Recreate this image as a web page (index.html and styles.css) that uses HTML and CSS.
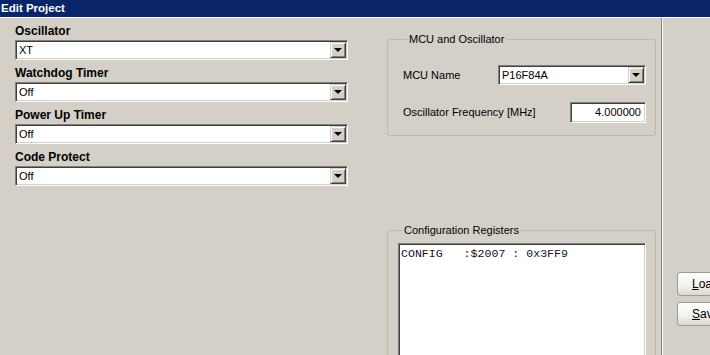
FILE: index.html
```html
<!DOCTYPE html>
<html lang="en">
<head>
    <meta charset="UTF-8">
    <title>Edit Project</title>
    <link rel="stylesheet" href="styles.css">
</head>
<body>
    <div class="titlebar">Edit Project</div>

    <div class="main">
        <!-- Fuse options -->
        <div class="options">
            <div class="field">
                <label>Oscillator</label>
                <div class="combo"><span class="value">XT</span><span class="drop"></span></div>
            </div>
            <div class="field">
                <label>Watchdog Timer</label>
                <div class="combo"><span class="value">Off</span><span class="drop"></span></div>
            </div>
            <div class="field">
                <label>Power Up Timer</label>
                <div class="combo"><span class="value">Off</span><span class="drop"></span></div>
            </div>
            <div class="field">
                <label>Code Protect</label>
                <div class="combo"><span class="value">Off</span><span class="drop"></span></div>
            </div>
        </div>

        <!-- MCU settings -->
        <div class="mcu">
            <fieldset class="group">
                <legend>MCU and Oscillator</legend>
                <div class="row">
                    <span>MCU Name</span>
                    <div class="combo mcu-combo"><span class="value">P16F84A</span><span class="drop"></span></div>
                </div>
                <div class="row">
                    <span>Oscillator Frequency [MHz]</span>
                    <div class="textbox">4.000000</div>
                </div>
            </fieldset>

            <fieldset class="group registers">
                <legend>Configuration Registers</legend>
                <div class="memo">CONFIG   :$2007 : 0x3FF9</div>
            </fieldset>
        </div>

        <div class="separator"></div>

        <div class="actions">
            <button><u>L</u>oad</button>
            <button><u>S</u>ave</button>
        </div>
    </div>
</body>
</html>
```

FILE: styles.css
```css
html, body {
    margin: 0;
    padding: 0;
}
body {
    width: 710px;
    height: 355px;
    overflow: hidden;
    background: #d4d0c8;
    font-family: "Liberation Sans", Arial, sans-serif;
    font-size: 11px;
    color: #000;
}
.titlebar {
    height: 17px;
    line-height: 16px;
    padding-left: 1px;
    background: #0a246a;
    color: #fff;
    font-weight: bold;
    font-size: 11.5px;
    border-bottom: 1px solid #fff;
}
.main {
    display: flex;
    height: 337px;
    overflow: hidden;
}
.main > * {
    flex: none;
}

/* left column */
.options {
    width: 333px;
    margin-left: 15px;
}
.field {
    margin-top: 5px;
}
.field label {
    display: block;
    font-weight: bold;
    font-size: 12px;
    line-height: 16px;
    margin-bottom: 1px;
}
.combo {
    display: flex;
    align-items: center;
    height: 20px;
    box-sizing: border-box;
    background: #fff;
    border: 1px solid;
    border-color: #808080 #fff #fff #808080;
    box-shadow: inset 1px 1px #404040, inset -1px -1px #d4d0c8;
    padding: 1px;
}
.combo .value {
    flex: 1;
    padding-left: 2px;
    line-height: 16px;
}
.drop {
    position: relative;
    width: 16px;
    height: 16px;
    box-sizing: border-box;
    background: #d4d0c8;
    border: 1px solid;
    border-color: #d4d0c8 #404040 #404040 #d4d0c8;
    box-shadow: inset 1px 1px #fff, inset -1px -1px #808080;
}
.drop::after {
    content: "";
    position: absolute;
    left: 3px;
    top: 5px;
    border-left: 4px solid transparent;
    border-right: 4px solid transparent;
    border-top: 4px solid #000;
}

/* middle column */
.mcu {
    width: 269px;
    margin-left: 39px;
}
.group {
    margin: 14px 0 0;
    padding: 0 9px 0 15px;
    border: 1px solid #bcb8b0;
    border-radius: 3px;
    height: 104px;
    box-sizing: border-box;
}
.group legend {
    padding: 0 2px;
    margin-left: 4px;
    line-height: 14px;
}
.row {
    display: flex;
    align-items: center;
    justify-content: space-between;
    height: 20px;
}
.row:first-of-type {
    margin-top: 19px;
}
.row + .row {
    margin-top: 17px;
}
.mcu-combo {
    width: 148px;
}
.textbox {
    width: 76px;
    height: 21px;
    box-sizing: border-box;
    background: #fff;
    border: 1px solid;
    border-color: #808080 #fff #fff #808080;
    box-shadow: inset 1px 1px #404040, inset -1px -1px #d4d0c8;
    text-align: right;
    padding: 0 4px;
    line-height: 19px;
}
.registers {
    margin-top: 87px;
    height: 200px;
    padding: 6px 9px 0 10px;
}
.memo {
    height: 140px;
    box-sizing: border-box;
    background: #fff;
    border: 1px solid;
    border-color: #808080 #fff #fff #808080;
    box-shadow: inset 1px 1px #404040, inset -1px -1px #d4d0c8;
    padding: 3px 2px 0;
    font-family: "Liberation Mono", "Courier New", monospace;
    font-size: 11.6px;
    line-height: 14px;
    white-space: pre;
    color: #201020;
}

/* separator and buttons */
.separator {
    margin-left: 5px;
    border-left: 1px solid #808080;
    border-right: 1px solid #fff;
}
.actions {
    display: flex;
    flex-direction: column;
    padding: 254px 0 0 14px;
    gap: 6px;
}
.actions button {
    width: 75px;
    height: 24px;
    border: 1px solid #9c9a94;
    border-radius: 3px;
    background: linear-gradient(#ffffff, #f4f3ee 55%, #dcd8cf);
    font-family: "Liberation Sans", Arial, sans-serif;
    font-size: 12px;
    text-align: left;
    padding: 0 0 0 14px;
    color: #000;
}
```
